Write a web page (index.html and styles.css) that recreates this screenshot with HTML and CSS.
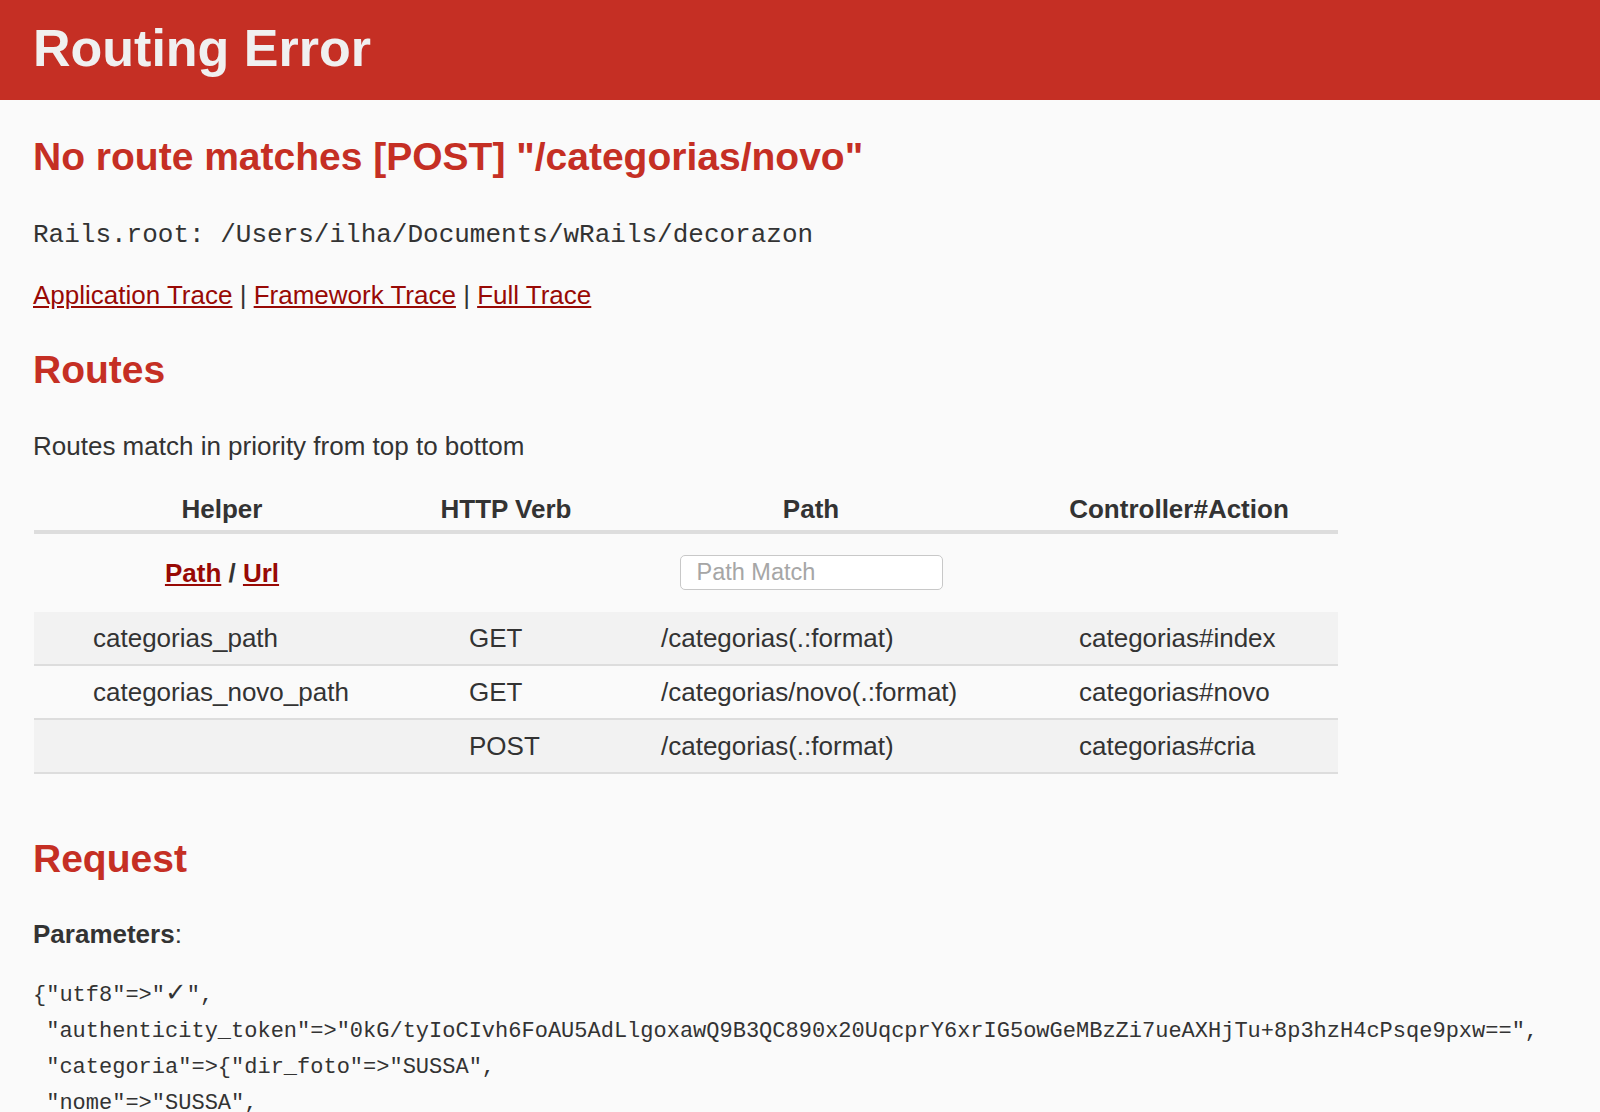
FILE: index.html
```html
<!DOCTYPE html>
<html lang="en">
<head>
<meta charset="utf-8">
<title>Action Controller: Exception caught</title>
<link rel="stylesheet" href="styles.css">
</head>
<body>
<header class="page-header">
  <h1 class="page-title">Routing Error</h1>
</header>
<div class="container">
  <h2 class="section-title">No route matches [POST] "/categorias/novo"</h2>
  <p class="para"><code class="code">Rails.root: /Users/ilha/Documents/wRails/decorazon</code></p>
  <p class="para traces"><a href="#" class="link">Application Trace</a> | <a href="#" class="link">Framework Trace</a> | <a href="#" class="link">Full Trace</a></p>

  <h2 class="section-title">Routes</h2>
  <p class="para">Routes match in priority from top to bottom</p>

  <table class="route-table">
    <thead>
      <tr class="head-row">
        <th class="head-cell col-helper">Helper</th>
        <th class="head-cell col-verb">HTTP Verb</th>
        <th class="head-cell col-path">Path</th>
        <th class="head-cell col-action">Controller#Action</th>
      </tr>
      <tr class="filter-row">
        <th class="filter-cell"><a href="#" class="link">Path</a> / <a href="#" class="link">Url</a></th>
        <th class="filter-cell"></th>
        <th class="filter-cell"><input class="path-search" type="search" placeholder="Path Match"></th>
        <th class="filter-cell"></th>
      </tr>
    </thead>
    <tbody>
      <tr class="route-row">
        <td class="route-cell">categorias_path</td>
        <td class="route-cell">GET</td>
        <td class="route-cell">/categorias(.:format)</td>
        <td class="route-cell">categorias#index</td>
      </tr>
      <tr class="route-row">
        <td class="route-cell">categorias_novo_path</td>
        <td class="route-cell">GET</td>
        <td class="route-cell">/categorias/novo(.:format)</td>
        <td class="route-cell">categorias#novo</td>
      </tr>
      <tr class="route-row">
        <td class="route-cell"></td>
        <td class="route-cell">POST</td>
        <td class="route-cell">/categorias(.:format)</td>
        <td class="route-cell">categorias#cria</td>
      </tr>
    </tbody>
  </table>

  <h2 class="section-title request-title">Request</h2>
  <p class="para"><b>Parameters</b>:</p>
  <pre class="params">{"utf8"=&gt;"<span class="check">✓</span>",
 "authenticity_token"=&gt;"0kG/tyIoCIvh6FoAU5AdLlgoxawQ9B3QC890x20UqcprY6xrIG5owGeMBzZi7ueAXHjTu+8p3hzH4cPsqe9pxw==",
 "categoria"=&gt;{"dir_foto"=&gt;"SUSSA",
 "nome"=&gt;"SUSSA",
 "descricao"=&gt;"SUSSA"},
 "commit"=&gt;"Salvar"}</pre>
</div>
</body>
</html>
```

FILE: styles.css
```css
html, body {
  margin: 0;
  padding: 0;
}

body {
  background: #FAFAFA;
  color: #333;
  font-family: "Liberation Sans", Arial, Helvetica, sans-serif;
  font-size: 26px;
  line-height: 36px;
}

.page-header {
  background: #C52F24;
  color: #F0F0F0;
  padding: 20px 33px 23px;
}

.page-title {
  margin: 0;
  font-size: 52px;
  line-height: 57px;
  font-weight: bold;
}

.container {
  padding: 0 33px;
}

.section-title {
  color: #C52F24;
  font-size: 39px;
  line-height: 50px;
  font-weight: bold;
  margin: 32.4px 0;
}

.request-title {
  margin-top: 60px;
}

.para {
  margin: 26px 0;
}

.code {
  font-family: "Liberation Mono", "Courier New", monospace;
  font-size: 26px;
  line-height: 1;
}

.link {
  color: #980905;
  text-decoration: underline;
}

.route-table {
  border-collapse: separate;
  border-spacing: 0;
  table-layout: fixed;
  width: 1304px;
  margin: 0 0 0 1px;
}

.head-cell {
  padding: 1px 0 3px;
  border-bottom: 4px solid #ddd;
  text-align: center;
  font-weight: bold;
  line-height: 36px;
}

.col-helper { width: 376px; }
.col-verb { width: 192px; }
.col-path { width: 418px; }
.col-action { width: 318px; }

.filter-cell {
  padding: 20px 0;
  line-height: 38px;
  text-align: center;
  vertical-align: middle;
  font-weight: bold;
}

.path-search {
  display: block;
  margin: 0 auto;
  box-sizing: border-box;
  width: 263px;
  height: 35px;
  padding: 0 16px;
  border: 1px solid #c8c8c8;
  border-radius: 5px;
  background: #fff;
  font-family: "Liberation Sans", Arial, sans-serif;
  font-size: 23.5px;
  color: #333;
  outline: none;
  -webkit-appearance: none;
  appearance: none;
}

.path-search::placeholder {
  color: #a6a6a6;
}

.route-row:nth-child(odd) {
  background: #f2f2f2;
}

.route-cell {
  padding: 8px 59px;
  border-bottom: 2px solid #ddd;
  line-height: 36px;
  text-align: left;
  white-space: nowrap;
}

.params {
  font-family: "Liberation Mono", "Courier New", monospace;
  font-size: 22px;
  line-height: 36px;
  white-space: pre-wrap;
  margin: 26px 0 22px;
}

.check {
  font-family: "DejaVu Sans", sans-serif;
  font-weight: bold;
  font-size: 26px;
  line-height: 1;
}
```
